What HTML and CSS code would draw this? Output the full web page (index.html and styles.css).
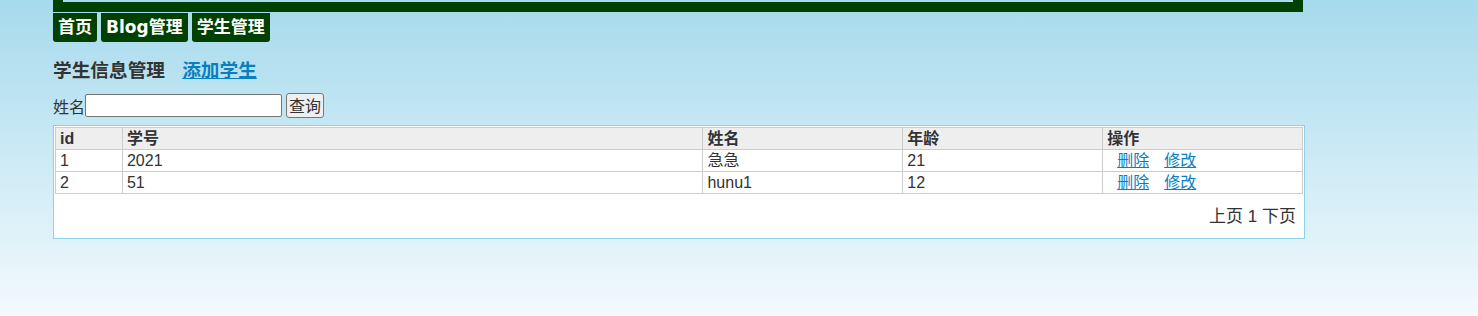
FILE: index.html
```html
<!DOCTYPE html>
<html lang="zh-CN">
<head>
    <meta charset="UTF-8">
    <title>学生信息管理</title>
    <link rel="stylesheet" href="styles.css">
</head>
<body>
    <div class="page">
        <div class="banner"><div class="banner-inner"></div></div>

        <ul class="nav">
            <li><a href="#">首页</a></li>
            <li><a href="#">Blog管理</a></li>
            <li><a href="#">学生管理</a></li>
        </ul>

        <h2 class="title">学生信息管理 <a href="#" class="add-link">添加学生</a></h2>

        <form class="search">
            <label for="name">姓名</label><input type="text" id="name" name="name">
            <button type="submit">查询</button>
        </form>

        <div class="table-box">
            <table class="list">
                <tr>
                    <th class="c-id">id</th>
                    <th class="c-no">学号</th>
                    <th class="c-name">姓名</th>
                    <th class="c-age">年龄</th>
                    <th class="c-op">操作</th>
                </tr>
                <tr>
                    <td>1</td>
                    <td>2021</td>
                    <td>急急</td>
                    <td>21</td>
                    <td class="ops"><a href="#">删除</a><a href="#">修改</a></td>
                </tr>
                <tr>
                    <td>2</td>
                    <td>51</td>
                    <td>hunu1</td>
                    <td>12</td>
                    <td class="ops"><a href="#">删除</a><a href="#">修改</a></td>
                </tr>
            </table>
            <div class="pager">上页 1 下页</div>
        </div>
    </div>
</body>
</html>
```

FILE: styles.css
```css
* {
    margin: 0;
    padding: 0;
    box-sizing: border-box;
}

html, body {
    height: 100%;
}

body {
    background: linear-gradient(#a6daed, #f3fafd);
    font-family: "Liberation Sans", "Noto Sans CJK SC", sans-serif;
    color: #333;
}

.page {
    width: 1252px;
    margin-left: 53px;
}

.banner {
    width: 1250px;
    height: 12px;
    background: #004000;
    padding: 0 10px;
}

.banner-inner {
    height: 2px;
    background: #a8dcee;
}

.nav {
    list-style: none;
    display: flex;
    gap: 4px;
    margin-top: 1px;
}

.nav a {
    display: block;
    height: 29px;
    line-height: 29px;
    padding: 0 5px;
    background: #004000;
    border-radius: 0 0 3px 3px;
    color: #fff;
    font-family: "DejaVu Sans", "Noto Sans CJK SC", sans-serif;
    font-size: 17px;
    font-weight: bold;
    text-decoration: none;
}

.title {
    margin-top: 14px;
    font-family: "Noto Sans CJK SC", sans-serif;
    font-size: 18.67px;
    line-height: 26px;
    color: #333;
}

.add-link {
    margin-left: 13px;
    color: #0a7fbf;
}

.search {
    display: flex;
    align-items: center;
    margin-top: 11px;
    font-family: "Noto Sans CJK SC", sans-serif;
    font-size: 16px;
}

.search input {
    width: 197px;
    height: 23px;
    border: 1px solid #767676;
    border-radius: 2px;
}

.search button {
    margin-left: 4px;
    height: 25px;
    padding: 0 2px;
    font-family: "Noto Sans CJK SC", sans-serif;
    font-size: 16px;
    line-height: 21px;
    color: #333;
    background: #efefef;
    border: 1px solid #767676;
    border-radius: 3px;
}

.table-box {
    margin-top: 7px;
    width: 1252px;
    border: 1px solid #8fd2ec;
    background: #fff;
    padding: 1px;
}

.list {
    width: 1248px;
    border-collapse: collapse;
    font-size: 16px;
}

.list th,
.list td {
    border: 1px solid #ccc;
    padding: 0 4px;
    height: 22px;
    line-height: 20px;
    text-align: left;
}

.list th {
    background: #eee;
    font-weight: bold;
}

.c-id { width: 67px; }
.c-no { width: 581px; }
.c-name { width: 200px; }
.c-age { width: 200px; }
.c-op { width: 200px; }

.ops a {
    color: #0a7fbf;
    margin-left: 10px;
}

.ops a + a {
    margin-left: 15px;
}

.pager {
    text-align: right;
    padding: 12px 7px 9px;
    font-size: 17px;
    line-height: 22px;
}
```
